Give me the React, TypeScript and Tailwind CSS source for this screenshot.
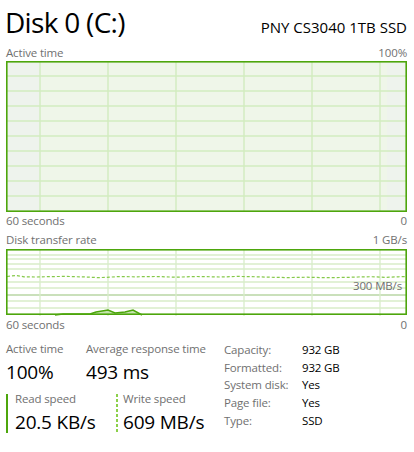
import React from "react";

const FONT = { fontFamily: '"Open Sans", "Noto Sans", sans-serif' };

const vLines = [34, 102, 170, 238, 306, 374];

function ActiveGraph() {
  const hLines = [15, 30, 45, 60, 75, 90, 105, 120, 135];
  return (
    <svg className="block h-full w-full" viewBox="0 0 401 151">
      <rect x="0" y="0" width="401" height="151" fill="#eff6e9" />
      <rect x="0" y="0" width="34" height="151" fill="#eef3ed" />
      <rect x="381" y="0" width="20" height="151" fill="#eef3ed" />
      {hLines.map((y) => (
        <line key={y} x1="0" x2="401" y1={y} y2={y} stroke="#d2ecbf" strokeWidth="1.4" />
      ))}
      {vLines.map((x) => (
        <line key={x} x1={x} x2={x} y1="0" y2="151" stroke="#d2ecbf" strokeWidth="1.4" />
      ))}
      <rect x="0.8" y="0.8" width="399.4" height="149.4" fill="none" stroke="#4da60c" strokeWidth="1.6" />
    </svg>
  );
}

function TransferGraph() {
  const hLines = [6, 10, 15, 20, 33, 39, 52, 59];
  const write =
    "1,27.5 10,26.5 18,27.8 30,28 45,27.6 60,27.4 80,28 92,28.6 100,28.4 112,27.6 130,27.8 150,27.5 170,28.2 190,27.5 200,27.7 215,28 232,27.4 250,27.8 268,28.3 282,28.6 300,28.2 320,28.7 340,28.4 352,28 365,27.7 380,28.4 392,27.8 400,27.6";
  const read = "49,66 57,65 84,65 90,63 102,61 109,64 119,63 127,61 136,66";
  return (
    <svg className="block h-full w-full" viewBox="0 0 401 67">
      <rect x="0" y="0" width="401" height="67" fill="#ffffff" />
      {hLines.map((y) => (
        <line key={y} x1="0" x2="401" y1={y} y2={y} stroke="#d8edc9" strokeWidth="1.3" />
      ))}
      <line x1="0" x2="401" y1="46" y2="46" stroke="#b9d6a5" strokeWidth="1.3" />
      {vLines.map((x) => (
        <line key={x} x1={x} x2={x} y1="0" y2="67" stroke="#d8edc9" strokeWidth="1.3" />
      ))}
      <polygon points={read} fill="#c4e3ad" />
      <polyline points={read} fill="none" stroke="#4da60c" strokeWidth="1.5" />
      <polyline points={write} fill="none" stroke="#86c94a" strokeWidth="1.2" strokeDasharray="3 2" />
      <rect x="0.8" y="0.8" width="399.4" height="64.4" fill="none" stroke="#4da60c" strokeWidth="1.6" />
    </svg>
  );
}

function Row({ left, right }: { left: string; right: string }) {
  return (
    <div className="flex items-center justify-between text-[11.5px] leading-[16px] tracking-[-0.15px] text-[#707070]">
      <span>{left}</span>
      <span>{right}</span>
    </div>
  );
}

const info = [
  ["Capacity:", "932 GB"],
  ["Formatted:", "932 GB"],
  ["System disk:", "Yes"],
  ["Page file:", "Yes"],
  ["Type:", "SSD"],
];

const label = "text-[11.5px] leading-[16px] tracking-[-0.15px] text-[#707070]";
const value = "text-[19px] leading-[24px] tracking-[-0.2px]";

export default function App() {
  return (
    <div className="h-[452px] w-[414px] overflow-hidden bg-white pl-[6px] pr-[7px] text-black" style={FONT}>
      <div className="flex h-[44px] items-baseline justify-between pt-[4px]">
        <span className="ml-[-1px] text-[28px] leading-[36px] tracking-[-0.7px]">Disk 0 (C:)</span>
        <span className="text-[15px] leading-[20px]">PNY CS3040 1TB SSD</span>
      </div>
      <div className="flex h-[17px] flex-col justify-center">
        <Row left="Active time" right="100%" />
      </div>
      <div className="h-[151px]">
        <ActiveGraph />
      </div>
      <div className="flex h-[18px] flex-col justify-center">
        <Row left="60 seconds" right="0" />
      </div>
      <div className="flex h-[19px] flex-col justify-center">
        <Row left="Disk transfer rate" right="1 GB/s" />
      </div>
      <div className="relative h-[67px]">
        <TransferGraph />
        <span className={`absolute right-[5px] top-[29px] ${label}`}>300 MB/s</span>
      </div>
      <div className="flex h-[18px] flex-col justify-center">
        <Row left="60 seconds" right="0" />
      </div>
      <div className="flex items-start pt-[7px]">
        <div className="flex w-[218px] flex-col">
          <div className="flex">
            <div className="flex w-[80px] flex-col">
              <span className={label}>Active time</span>
              <span className={`mt-[3px] ${value}`}>100%</span>
            </div>
            <div className="flex flex-col">
              <span className={label}>Average response time</span>
              <span className={`mt-[3px] ${value}`}>493 ms</span>
            </div>
          </div>
          <div className="mt-[10px] flex">
            <div className="flex h-[39px] w-[110px]">
              <div className="w-[2px] bg-[#4da60c]" />
              <div className="flex flex-col pl-[7px]">
                <span className={`mt-[-3px] ${label}`}>Read speed</span>
                <span className={`mt-[3px] ${value}`}>20.5 KB/s</span>
              </div>
            </div>
            <div className="flex h-[39px]">
              <div className="w-[2px] bg-[repeating-linear-gradient(to_bottom,#8cd04a_0_3px,transparent_3px_5px)]" />
              <div className="flex flex-col pl-[5px]">
                <span className={`mt-[-3px] ${label}`}>Write speed</span>
                <span className={`mt-[3px] ${value}`}>609 MB/s</span>
              </div>
            </div>
          </div>
        </div>
        <div className="grid grid-cols-[78px_auto] content-start text-[11.5px] leading-[17.7px] tracking-[-0.15px]">
          {info.map(([k, v]) => (
            <React.Fragment key={k}>
              <span className="text-[#707070]">{k}</span>
              <span>{v}</span>
            </React.Fragment>
          ))}
        </div>
      </div>
    </div>
  );
}
